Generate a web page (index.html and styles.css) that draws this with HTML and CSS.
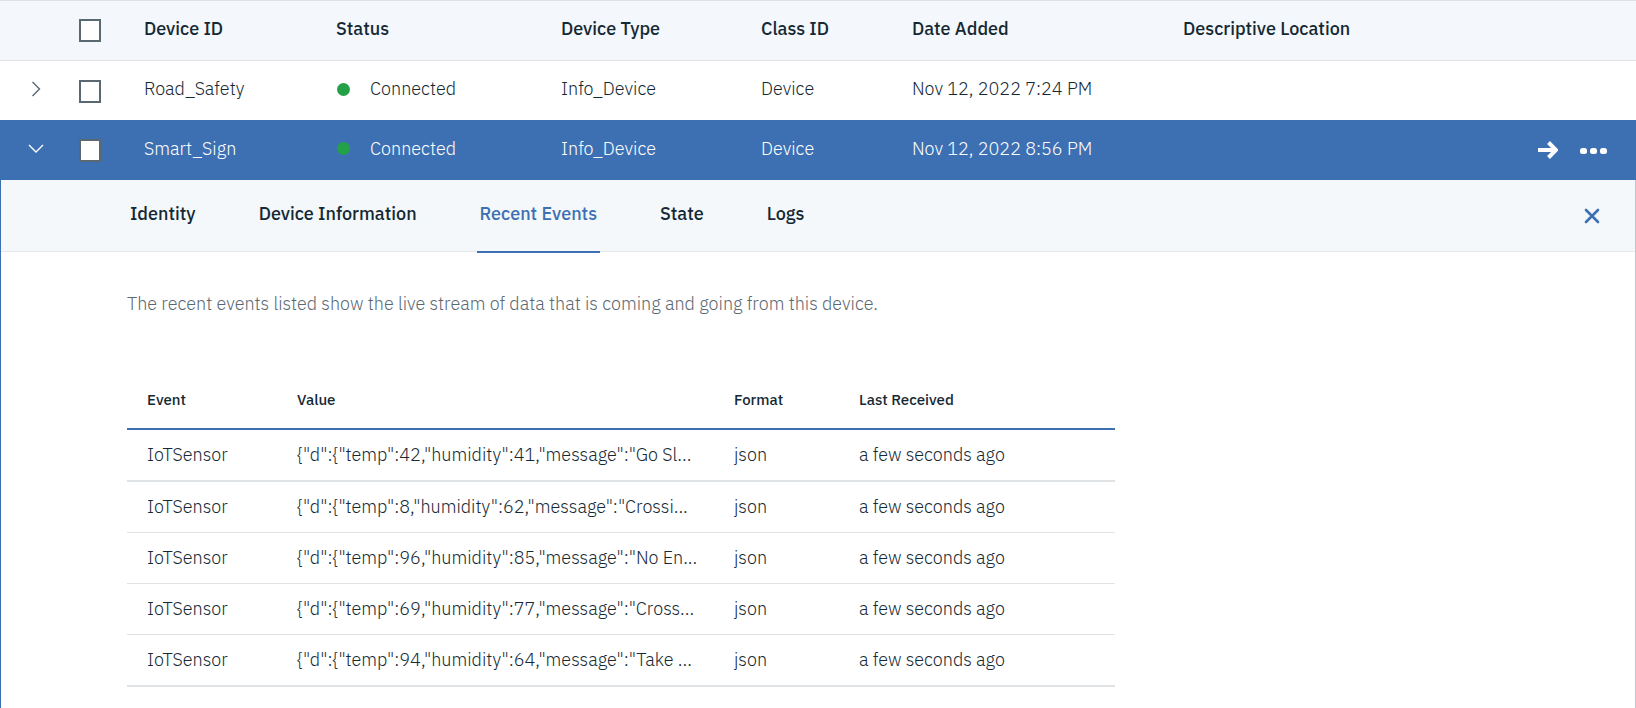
FILE: index.html
```html
<!DOCTYPE html>
<html lang="en">
<head>
<meta charset="utf-8">
<title>Devices</title>
<link rel="stylesheet" href="styles.css">
</head>
<body>
<table class="devices">
  <colgroup>
    <col class="col-expand"><col class="col-check"><col class="col-id"><col class="col-status"><col class="col-type"><col class="col-class"><col class="col-date"><col class="col-location"><col class="col-actions">
  </colgroup>
  <thead>
    <tr class="head-row">
      <td></td>
      <td><input type="checkbox" class="check" aria-label="Select all devices"></td>
      <th scope="col">Device ID</th>
      <th scope="col">Status</th>
      <th scope="col">Device Type</th>
      <th scope="col">Class ID</th>
      <th scope="col">Date Added</th>
      <th scope="col">Descriptive Location</th>
      <td></td>
    </tr>
  </thead>
  <tbody>
    <tr class="device-row">
      <td><button type="button" class="icon-button expand" aria-label="Expand Road_Safety" aria-expanded="false"><svg width="16" height="16" viewBox="0 0 16 16"><path d="M4.500 1 11.500 8 4.500 15"/></svg></button></td>
      <td><input type="checkbox" class="check" aria-label="Select Road_Safety"></td>
      <td>Road_Safety</td>
      <td><span class="status"><span class="dot"></span>Connected</span></td>
      <td>Info_Device</td>
      <td>Device</td>
      <td>Nov 12, 2022 7:24 PM</td>
      <td></td>
      <td></td>
    </tr>
    <tr class="device-row selected">
      <td><button type="button" class="icon-button expand" aria-label="Collapse Smart_Sign" aria-expanded="true"><svg width="16" height="16" viewBox="0 0 16 16"><path d="M1 4 8 11 15 4"/></svg></button></td>
      <td><input type="checkbox" class="check" aria-label="Select Smart_Sign"></td>
      <td>Smart_Sign</td>
      <td><span class="status"><span class="dot"></span>Connected</span></td>
      <td>Info_Device</td>
      <td>Device</td>
      <td>Nov 12, 2022 8:56 PM</td>
      <td></td>
      <td>
        <div class="actions">
          <button type="button" class="icon-button" aria-label="Open device"><svg width="20" height="20" viewBox="0 0 20 20"><path class="arrow" d="M0 10H17M10.500 2.500 18 10 10.500 17.500"/></svg></button>
          <button type="button" class="icon-button" aria-label="More actions"><svg class="more" width="28" height="20" viewBox="0 0 28 20"><rect x="0" y="8" width="7" height="6" rx="2.500"/><rect x="10" y="8" width="7" height="6" rx="2.500"/><rect x="20" y="8" width="7" height="6" rx="2.500"/></svg></button>
        </div>
      </td>
    </tr>
    <tr>
      <td colspan="9">
        <section class="detail">
          <header class="detail-bar">
            <nav class="tabs" role="tablist">
              <button type="button" role="tab" class="tab">Identity</button>
              <button type="button" role="tab" class="tab">Device Information</button>
              <button type="button" role="tab" class="tab active" aria-selected="true">Recent Events</button>
              <button type="button" role="tab" class="tab">State</button>
              <button type="button" role="tab" class="tab">Logs</button>
            </nav>
            <button type="button" class="icon-button close" aria-label="Close details"><svg width="16" height="16" viewBox="0 0 16 16"><path d="M2 2 14 14M14 2 2 14"/></svg></button>
          </header>
          <div class="detail-body">
            <p class="intro">The recent events listed show the live stream of data that is coming and going from this device.</p>
            <table class="events">
              <colgroup><col class="ev-name"><col class="ev-value"><col class="ev-format"><col class="ev-time"></colgroup>
              <thead>
                <tr><th scope="col">Event</th><th scope="col">Value</th><th scope="col">Format</th><th scope="col">Last Received</th></tr>
              </thead>
              <tbody>
                <tr class="strong-line"><td>IoTSensor</td><td>{"d":{"temp":42,"humidity":41,"message":"Go Sl...</td><td>json</td><td>a few seconds ago</td></tr>
                <tr><td>IoTSensor</td><td>{"d":{"temp":8,"humidity":62,"message":"Crossi...</td><td>json</td><td>a few seconds ago</td></tr>
                <tr><td>IoTSensor</td><td>{"d":{"temp":96,"humidity":85,"message":"No En...</td><td>json</td><td>a few seconds ago</td></tr>
                <tr><td>IoTSensor</td><td>{"d":{"temp":69,"humidity":77,"message":"Cross...</td><td>json</td><td>a few seconds ago</td></tr>
                <tr class="strong-line"><td>IoTSensor</td><td>{"d":{"temp":94,"humidity":64,"message":"Take ...</td><td>json</td><td>a few seconds ago</td></tr>
              </tbody>
            </table>
          </div>
        </section>
      </td>
    </tr>
  </tbody>
</table>
</body>
</html>
```
FILE: styles.css
```css
* { box-sizing: border-box; }

body {
  margin: 0;
  background: #fff;
  color: #152934;
  font: 300 18px/24px "IBM Plex Sans", Inter, "Noto Sans", sans-serif;
}

table {
  border-collapse: separate;
  border-spacing: 0;
  table-layout: fixed;
}

th, td { padding: 0; text-align: left; white-space: nowrap; }

svg { display: block; fill: none; stroke: currentColor; }

button { margin: 0; border: 0; background: none; font: inherit; color: inherit; cursor: pointer; }

/* Device list */
.devices { width: 100%; }
.col-expand { width: 79px; }
.col-check { width: 65px; }
.col-id { width: 192px; }
.col-status { width: 225px; }
.col-type { width: 200px; }
.col-class { width: 151px; }
.col-date { width: 271px; }
.col-actions { width: 120px; }

.head-row > * {
  height: 61px;
  padding-bottom: 4px;
  background: #f4f7fb;
  border-top: 1px solid #dfe3e6;
  border-bottom: 1px solid #dfe3e6;
}
.head-row th { font-weight: 500; }

.device-row > td { height: 59px; padding-bottom: 3px; }
.selected > td { height: 60px; background: #3d70b2; color: #fff; }

.check {
  appearance: none;
  display: block;
  width: 22px;
  height: 23px;
  margin: 4px 0 0;
  border: 2px solid #5a6872;
  background: #fff;
}

.icon-button { display: block; padding: 0; }
.expand { margin-left: 28px; color: #5a6872; }
.expand svg { stroke-width: 1.4; }
.selected .expand { color: #fff; }

.status { display: flex; align-items: center; gap: 20px; padding-left: 1px; }
.dot { width: 13px; height: 13px; border-radius: 50%; background: #24a148; }

.actions { display: flex; justify-content: flex-end; gap: 22px; padding: 3px 28px 0 0; }
.arrow { stroke-width: 4; }
.more { fill: currentColor; stroke: none; }

/* Expanded panel */
.detail {
  min-height: calc(100vh - 180px);
  border-left: 1px solid #3d70b2;
  border-right: 1px solid #c0c6cb;
}
.detail-bar {
  display: flex;
  justify-content: space-between;
  height: 72px;
  padding: 0 35px 0 126px;
  background: #f4f8fb;
  border-bottom: 1px solid #e5e8ea;
}
.tabs { display: flex; gap: 57px; height: 73px; }
.tab {
  padding: 0 3px 3px;
  border-bottom: 2px solid transparent;
  font-weight: 500;
}
.tab.active { color: #3d70b2; border-color: #3d70b2; }
.close { align-self: center; color: #3d70b2; }
.close svg { stroke-width: 2.6; stroke-linecap: round; }

.detail-body { padding: 40px 40px 20px 126px; }
.intro { margin: 0 0 56px; color: #5a6872; }

/* Events */
.events { width: 100%; max-width: 988px; }
.ev-name { width: 170px; }
.ev-value { width: 437px; }
.ev-format { width: 125px; }

.events th, .events td { border-bottom: 1px solid #dfe3e6; }
.events th:first-child, .events td:first-child { padding-left: 20px; }
.events th {
  height: 58px;
  font-size: 15px;
  font-weight: 500;
  border-bottom: 2px solid #3d70b2;
}
.events td { height: 51px; }
.events .strong-line td { height: 52px; border-bottom-width: 2px; }
```
